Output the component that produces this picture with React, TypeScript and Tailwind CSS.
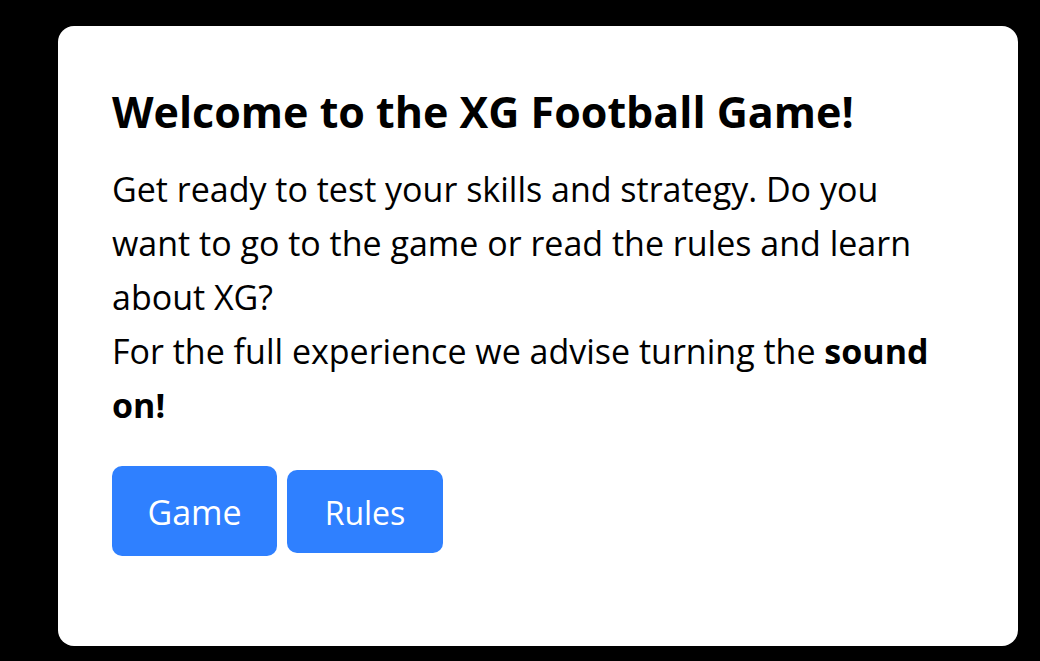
const App = () => {
  return (
    <div className="min-h-[661px] w-full bg-black pt-[26px] pl-[58px]" style={{ fontFamily: '"Open Sans", "Noto Sans", sans-serif' }}>
      <div className="h-[620px] w-[960px] rounded-[16px] bg-white px-[54px] pt-[61px] text-black">
        <h1 className="text-[43px] font-bold leading-[50px]">Welcome to the XG Football Game!</h1>
        <p className="mt-[25px] text-[34px] leading-[54px]">
          Get ready to test your skills and strategy. Do you want to go to the game or read the rules and learn about XG?
          <br />
          For the full experience we advise turning the <strong className="font-bold">sound on!</strong>
        </p>
        <div className="mt-[34px] flex items-center gap-[10px]">
          <button className="flex h-[90px] w-[165px] items-center justify-center rounded-[10px] bg-[#2f80ff] pt-[3px] text-[34px] text-white">
            Game
          </button>
          <button className="flex h-[83px] w-[156px] items-center justify-center rounded-[10px] bg-[#2f80ff] pt-[3px] text-[32px] text-white">
            Rules
          </button>
        </div>
      </div>
    </div>
  );
};

export default App;
